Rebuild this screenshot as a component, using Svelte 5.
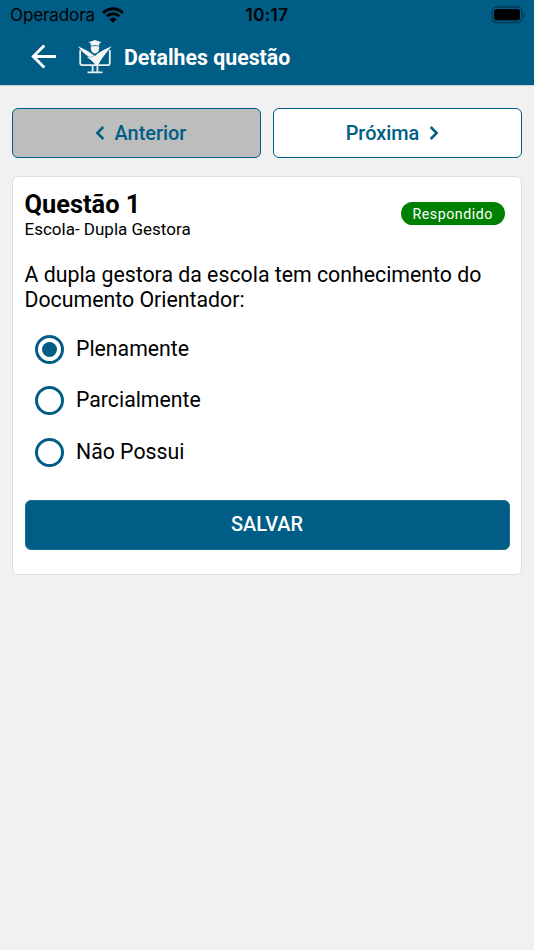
<script lang="ts">
	const options = ['Plenamente', 'Parcialmente', 'Não Possui'];

	let selected = $state('Plenamente');
</script>

<header>
	<div class="status-bar">
		<div class="carrier">
			<span>Operadora</span>
			<svg class="wifi" viewBox="0 0 22 16" width="22" height="16">
				<path d="M1.2 5.9C6.8.3 15.2.3 20.8 5.9" />
				<path d="M4.7 9.3c3.6-3.4 9-3.4 12.6 0" />
				<path class="dot" d="M7.3 12.3c2.1-2 5.3-2 7.4 0L11 15.8z" />
			</svg>
		</div>
		<span class="clock">10:17</span>
		<svg class="battery" viewBox="0 0 35 18" width="35" height="18">
			<rect class="case" x="1" y="1" width="30" height="15.5" rx="4.5" />
			<rect x="3" y="3" width="26" height="11.3" rx="2.6" />
			<path class="tip" d="M32.5 6.4c2 .8 2 4 0 4.8z" />
		</svg>
	</div>
	<div class="title-bar">
		<button class="back" aria-label="Voltar">
			<svg viewBox="0 0 26 26" width="26" height="26">
				<path d="M25 12.5H3M13.3 1.5l-11 11 11 11" />
			</svg>
		</button>
		<svg class="logo" viewBox="0 0 36 36" width="36" height="36">
			<path class="screen" d="M3.2 11v13q0 2.200 2.300 2.200h25q2.300 0 2.300-2.200V11M15.600 26v7M20.400 26v7M10.500 33.300h15" />
			<path d="M18 1 11.500 3.300 13.800 4.500v2.200q4.200-1 8.400 0V4.500l2.300-1.200z" />
			<path d="M13.800 7.600q4.200-1 8.400 0c.2 4-1.300 6.800-4.200 6.800s-4.400-2.800-4.200-6.800z" />
			<path d="M1 7.300c5.500 2.700 12 5.700 17 9.700 4.300-4 10.500-7.500 16.800-9.700-5 5-9 11-12.800 17.200-1.200 2-3.200 2-4.500.300-2-2.600-4.500-4.800-7.500-6.300l2-.7C7.500 15.500 4 11.500 1 7.300z" />
			<path class="cut" d="m11.300 18.700 6-2" />
		</svg>
		<h1>Detalhes questão</h1>
	</div>
</header>

<main>
	<nav>
		<button class="nav-button previous" disabled>
			<svg viewBox="0 0 10 16" width="10" height="16"><path d="m8.300 2-6 6 6 6" /></svg>
			<span>Anterior</span>
		</button>
		<button class="nav-button next">
			<span>Próxima</span>
			<svg viewBox="0 0 10 16" width="10" height="16"><path d="m1.700 2 6 6-6 6" /></svg>
		</button>
	</nav>

	<section class="card">
		<div class="card-header">
			<div>
				<h2>Questão 1</h2>
				<p class="subtitle">Escola- Dupla Gestora</p>
			</div>
			<span class="badge">Respondido</span>
		</div>
		<p class="question">A dupla gestora da escola tem conhecimento do Documento Orientador:</p>
		<div class="options">
			{#each options as option}
				<label>
					<input type="radio" name="answer" value={option} bind:group={selected} />
					<span>{option}</span>
				</label>
			{/each}
		</div>
		<button class="save">SALVAR</button>
	</section>
</main>

<style>
	:global(body) {
		background: #f1f1f1;
		font-family: Roboto, sans-serif;
		color: #000;
	}

	h1,
	h2,
	p {
		margin: 0;
	}

	button {
		font-family: inherit;
		padding: 0;
	}

	svg {
		display: block;
		flex-shrink: 0;
	}

	header {
		box-sizing: border-box;
		height: 86px;
		border-bottom: 1px solid #c3d0d5;
		background: #005d85;
	}

	.status-bar {
		display: grid;
		grid-template-columns: 1fr auto 1fr;
		align-items: center;
		height: 29px;
		padding: 0 8px 0 10px;
		font-family: Inter, sans-serif;
		font-size: 17px;
	}

	.carrier {
		display: flex;
		align-items: center;
		gap: 7px;
		letter-spacing: -0.1px;
	}

	.wifi {
		fill: none;
		stroke: #000;
		stroke-width: 2.9;
	}

	.wifi .dot {
		fill: #000;
		stroke: none;
	}

	.clock {
		margin-right: 2px;
		font-weight: 600;
		letter-spacing: 0.4px;
	}

	.battery {
		justify-self: end;
	}

	.case {
		fill: none;
		stroke: #003a54;
		stroke-width: 1.3;
	}

	.tip {
		fill: #003a54;
	}

	.title-bar {
		display: flex;
		align-items: center;
		height: 56px;
		padding-left: 31px;
	}

	.back {
		border: none;
		background: none;
	}

	.back path {
		fill: none;
		stroke: #fff;
		stroke-width: 2.9;
	}

	.logo {
		margin: 0 11px 0 20px;
		fill: #f4f6f7;
	}

	.screen {
		fill: none;
		stroke: #e8eff3;
		stroke-width: 1.8;
	}

	.cut {
		stroke: #8bb2c4;
		stroke-width: 0.8;
	}

	h1 {
		color: #fff;
		font-size: 21.3px;
		font-weight: 700;
	}

	main {
		padding: 22px 12px;
	}

	nav {
		display: grid;
		grid-template-columns: 1fr 1fr;
		gap: 12px;
		margin-bottom: 18px;
	}

	.nav-button {
		display: flex;
		align-items: center;
		justify-content: center;
		gap: 10px;
		height: 50px;
		border: 1px solid #005d85;
		border-radius: 6px;
		background: #fff;
		color: #005d85;
		font-size: 19.9px;
		font-weight: 500;
	}

	.previous {
		padding-left: 8px;
	}

	.next {
		padding-right: 10px;
	}

	.nav-button:disabled {
		background: #bdbdbd;
	}

	.nav-button path {
		fill: none;
		stroke: #005d85;
		stroke-width: 2.5;
	}

	.card {
		box-sizing: border-box;
		height: 399px;
		padding: 12px 11.5px 0 11.5px;
		border: 1px solid #dedede;
		border-radius: 6px;
		background: #fff;
	}

	.card-header {
		display: flex;
		justify-content: space-between;
		padding-right: 4.5px;
	}

	h2 {
		font-size: 25.4px;
		font-weight: 700;
		line-height: 30px;
	}

	.subtitle {
		font-size: 17px;
		line-height: 21px;
	}

	.badge {
		height: 23px;
		margin-top: 13px;
		padding: 0 12px 0 11px;
		border-radius: 12px;
		background: #008000;
		color: #fff;
		font-size: 14.2px;
		line-height: 24px;
		letter-spacing: 0.55px;
	}

	.question {
		margin-top: 22px;
		font-size: 21.3px;
		line-height: 25px;
	}

	.options {
		padding: 12px 0 0 10.5px;
	}

	label {
		display: flex;
		align-items: center;
		gap: 12px;
		height: 51.3px;
		font-size: 21.25px;
	}

	label span {
		margin-top: -2px;
	}

	input {
		appearance: none;
		box-sizing: border-box;
		display: grid;
		place-items: center;
		width: 29px;
		height: 29px;
		margin: 0;
		border: 3px solid #005d85;
		border-radius: 50%;
	}

	input:checked::before {
		content: '';
		width: 15px;
		height: 15px;
		border-radius: 50%;
		background: #005d85;
	}

	.save {
		display: block;
		width: 100%;
		height: 50px;
		margin-top: 22px;
		padding-bottom: 1px;
		border: 1px solid #1d7095;
		border-radius: 6px;
		background: #005d85;
		color: #fff;
		font-size: 19.9px;
		font-weight: 500;
	}
</style>
